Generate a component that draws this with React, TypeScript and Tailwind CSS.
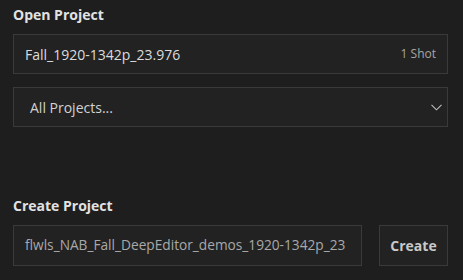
import React from "react";

export default function App() {
  return (
    <div
      className="w-[463px] h-[280px] bg-[#1e1e1e] px-[13px] pt-[5px] flex flex-col overflow-hidden"
      style={{ fontFamily: '"Open Sans", "Noto Sans", sans-serif' }}
    >
      <div className="text-[14px] leading-[20px] font-bold text-[#e2e2e2]">Open Project</div>
      <div className="mt-[9px] h-[40px] w-[435px] border border-[#3a3a3a] bg-[#222222] flex items-center justify-between pl-[11px] pr-[11px]">
        <span className="text-[14px] text-[#dcdcdc]">Fall_1920-1342p_23.976</span>
        <span className="text-[12px] text-[#a6a6a6]">1 Shot</span>
      </div>
      <div className="mt-[13px] h-[40px] w-[435px] border border-[#3a3a3a] bg-[#222222] flex items-center justify-between pl-[16px] pr-[5px]">
        <span className="text-[14px] text-[#d2d2d2]">All Projects...</span>
        <svg width="11" height="7" viewBox="0 0 11 7" fill="none">
          <polyline points="0.5,0.8 5.5,5.8 10.5,0.8" stroke="#bdbdbd" strokeWidth="1.1" />
        </svg>
      </div>
      <div className="mt-[69px] text-[14px] leading-[20px] font-bold text-[#e2e2e2]">Create Project</div>
      <div className="mt-[9px] flex gap-[17px]">
        <div className="h-[41px] w-[349px] border border-[#3a3a3a] bg-[#222222] flex items-center pl-[11px] overflow-hidden">
          <span className="text-[13.7px] text-[#a9a9a9] whitespace-nowrap">flwls_NAB_Fall_DeepEditor_demos_1920-1342p_23</span>
        </div>
        <div className="h-[41px] w-[69px] border border-[#3a3a3a] bg-[#222222] flex items-center justify-center">
          <span className="text-[14px] font-bold text-[#c9c9c9]">Create</span>
        </div>
      </div>
    </div>
  );
}
